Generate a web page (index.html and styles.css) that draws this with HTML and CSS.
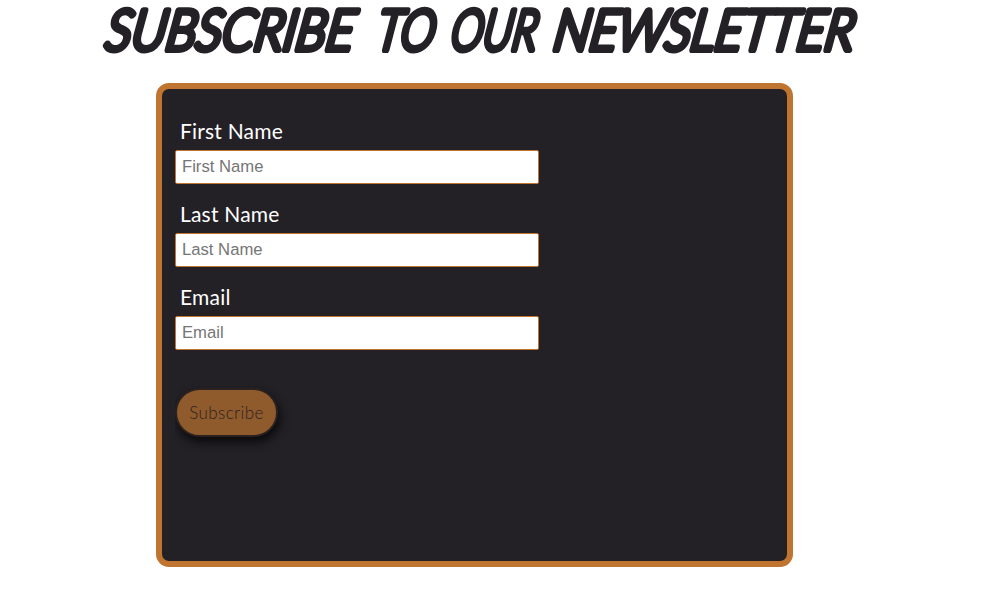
FILE: index.html
```html
<!DOCTYPE html>
<html lang="en">
<head>
<meta charset="utf-8">
<title>Newsletter</title>
<link rel="stylesheet" href="styles.css">
</head>
<body>
<main class="page">
  <h1 class="title">
    <svg class="lettering" width="1006" height="83" viewBox="0 0 1006 83">
      <text transform="translate(104 50) skewX(-9)" textLength="248" lengthAdjust="spacingAndGlyphs">SUBSCRIBE</text>
      <text transform="translate(375 50) skewX(-9)" textLength="58" lengthAdjust="spacingAndGlyphs">TO</text>
      <text transform="translate(449 50) skewX(-9)" textLength="86" lengthAdjust="spacingAndGlyphs">OUR</text>
      <text transform="translate(552 50) skewX(-9)" textLength="300" lengthAdjust="spacingAndGlyphs">NEWSLETTER</text>
    </svg>
  </h1>
  <form class="card">
    <div class="field">
      <label class="label" for="first">First Name</label>
      <input class="input" id="first" type="text" placeholder="First Name">
    </div>
    <div class="field">
      <label class="label" for="last">Last Name</label>
      <input class="input" id="last" type="text" placeholder="Last Name">
    </div>
    <div class="field">
      <label class="label" for="email">Email</label>
      <input class="input" id="email" type="text" placeholder="Email">
    </div>
    <div class="actions"><button class="button" type="button">Subscribe</button></div>
  </form>
</main>
</body>
</html>
```
FILE: styles.css
```css
* { box-sizing: border-box; }
body { margin: 0; background: #fff; overflow: hidden; }
.page { height: 605px; }
.title { margin: 0; height: 83px; }
.lettering {
  display: block;
  overflow: visible;
  font: italic 300 56px Lato, sans-serif;
  fill: #232126;
  stroke: #232126;
  stroke-width: 6.2px;
  stroke-linejoin: round;
}
.card {
  width: 637px;
  height: 484px;
  margin-left: 156px;
  padding: 28px 13px;
  border: 6px solid #bf7430;
  border-radius: 13px;
  background: #232126;
}
.field { height: 83px; }
.label {
  display: block;
  height: 33px;
  padding-left: 5px;
  color: #fff;
  font: 400 21px/28px Lato, sans-serif;
  letter-spacing: 0.2px;
}
.input {
  display: block;
  width: 364px;
  height: 34px;
  padding: 0 6px 1px;
  border: 1px solid #bf7430;
  border-radius: 2px;
  background: #fff;
  font: 16.67px "Liberation Sans", Arial, sans-serif;
}
.input::placeholder { color: #757575; }
.actions {
  height: 90px;
  padding-top: 22px;
  overflow: hidden;
}
.button {
  display: block;
  width: 103px;
  height: 49px;
  padding: 0 0 1px;
  border: 2px solid #2b211f;
  border-radius: 25px;
  background: #8f5b2d;
  color: #2c211f;
  font: 300 17px Lato, sans-serif;
  letter-spacing: 0.4px;
  box-shadow: 2px 5px 10px #0a090b;
}
```
